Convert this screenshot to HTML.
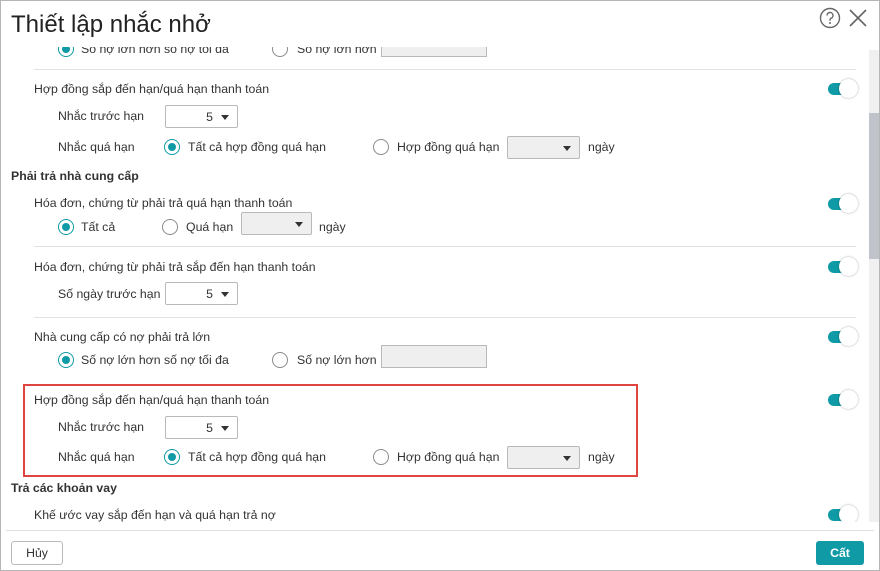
<!DOCTYPE html>
<html><head><meta charset="utf-8"><style>
*{box-sizing:border-box;margin:0;padding:0}
html,body{width:880px;height:571px;overflow:hidden}
body{background:#fff;font-family:"Liberation Sans",sans-serif;font-size:12.3px;color:#333;position:relative}
.frame{position:absolute;left:0;top:0;width:880px;height:571px;border:1px solid #b5b5b5}
.a{position:absolute;white-space:nowrap;line-height:14px}
.t{transform:translateY(-7px)}
.b{font-weight:bold}
.clip{position:absolute;left:0;top:47px;width:868px;height:475px;overflow:hidden}
.in{position:absolute;left:0;top:-47px;width:868px;height:570px}
.hr{position:absolute;height:1px;background:#e3e3e3;left:34px;width:822px}
.r{position:absolute;width:16px;height:16px;border:1px solid #8a8a8a;border-radius:50%;background:#fff;transform:translate(-8px,-8px)}
.r.on{border-color:#0f9aa5}
.r.on:after{content:"";position:absolute;left:3px;top:3px;width:8px;height:8px;border-radius:50%;background:#0f9aa5}
.sel{position:absolute;border:1px solid #b9b9b9;background:#fff;height:23px;border-radius:2px}
.sel.g{background:#efefef}
.sel span{position:absolute;right:24px;top:4px}
.sel:after{content:"";position:absolute;right:8px;top:9px;border-left:4px solid transparent;border-right:4px solid transparent;border-top:5px solid #333}
.box{position:absolute;border:1px solid #b9b9b9;background:#efefef;height:23px}
.tg{position:absolute;left:828px;width:30px;height:20px;transform:translateY(-10px)}
.tg:before{content:"";position:absolute;left:0;top:4px;width:22px;height:12px;border-radius:6px;background:#0f9aa5}
.tg:after{content:"";position:absolute;left:11px;top:0;width:19px;height:19px;border-radius:50%;background:#fff;box-shadow:0 0 2px rgba(0,0,0,.35)}
</style></head><body>
<div class="frame"></div>
<div class="a" style="left:11px;top:10px;font-size:24px;line-height:30px;color:#222">Thiết lập nhắc nhở</div>
<svg style="position:absolute;left:819px;top:7px" width="22" height="22" viewBox="0 0 22 22"><circle cx="11" cy="11" r="9.5" fill="none" stroke="#666" stroke-width="1.4"/><path d="M8 8.5a3 3 0 1 1 4 2.8c-.8.4-1 .9-1 1.7v.8" fill="none" stroke="#666" stroke-width="1.4"/><circle cx="11" cy="16" r="1" fill="#666"/></svg>
<svg style="position:absolute;left:848px;top:8px" width="20" height="20" viewBox="0 0 20 20"><path d="M2 2L18 18M18 2L2 18" stroke="#666" stroke-width="1.6"/></svg>
<div style="position:absolute;left:869px;top:50px;width:10px;height:472px;background:#f0f0f0"></div>
<div style="position:absolute;left:869px;top:113px;width:10px;height:146px;background:#c0c3ca"></div>
<div class="clip"><div class="in">
<div class="r on" style="left:66px;top:49px"></div><div class="a t" style="left:81px;top:49px">Số nợ lớn hơn số nợ tối đa</div>
<div class="r" style="left:280px;top:49px"></div><div class="a t" style="left:297px;top:49px">Số nợ lớn hơn</div>
<div class="box" style="left:381px;top:34px;width:106px"></div>
<div class="hr" style="top:69px"></div>
<div class="a t" style="left:34px;top:89px">Hợp đồng sắp đến hạn/quá hạn thanh toán</div><div class="tg" style="top:89px"></div>
<div class="a t" style="left:58px;top:116px">Nhắc trước hạn</div><div class="sel" style="left:165px;top:105px;width:73px"><span>5</span></div>
<div class="a t" style="left:58px;top:147px">Nhắc quá hạn</div>
<div class="r on" style="left:172px;top:147px"></div><div class="a t" style="left:188px;top:147px">Tất cả hợp đồng quá hạn</div>
<div class="r" style="left:381px;top:147px"></div><div class="a t" style="left:397px;top:147px">Hợp đồng quá hạn</div>
<div class="sel g" style="left:507px;top:136px;width:73px"></div><div class="a t" style="left:588px;top:147px">ngày</div>
<div class="a t b" style="left:11px;top:176px">Phải trả nhà cung cấp</div>
<div class="a t" style="left:34px;top:203px">Hóa đơn, chứng từ phải trả quá hạn thanh toán</div><div class="tg" style="top:204px"></div>
<div class="r on" style="left:66px;top:227px"></div><div class="a t" style="left:81px;top:227px">Tất cả</div>
<div class="r" style="left:170px;top:227px"></div><div class="a t" style="left:186px;top:227px">Quá hạn</div>
<div class="sel g" style="left:241px;top:212px;width:71px"></div><div class="a t" style="left:319px;top:227px">ngày</div>
<div class="hr" style="top:246px"></div>
<div class="a t" style="left:34px;top:267px">Hóa đơn, chứng từ phải trả sắp đến hạn thanh toán</div><div class="tg" style="top:267px"></div>
<div class="a t" style="left:58px;top:294px">Số ngày trước hạn</div><div class="sel" style="left:165px;top:282px;width:73px"><span>5</span></div>
<div class="hr" style="top:317px"></div>
<div class="a t" style="left:34px;top:337px">Nhà cung cấp có nợ phải trả lớn</div><div class="tg" style="top:337px"></div>
<div class="r on" style="left:66px;top:360px"></div><div class="a t" style="left:81px;top:360px">Số nợ lớn hơn số nợ tối đa</div>
<div class="r" style="left:280px;top:360px"></div><div class="a t" style="left:297px;top:360px">Số nợ lớn hơn</div>
<div class="box" style="left:381px;top:345px;width:106px"></div>
<div style="position:absolute;left:23px;top:384px;width:615px;height:93px;border:2px solid #e0443e"></div>
<div class="a t" style="left:34px;top:400px">Hợp đồng sắp đến hạn/quá hạn thanh toán</div><div class="tg" style="top:400px"></div>
<div class="a t" style="left:58px;top:427px">Nhắc trước hạn</div><div class="sel" style="left:165px;top:416px;width:73px"><span>5</span></div>
<div class="a t" style="left:58px;top:457px">Nhắc quá hạn</div>
<div class="r on" style="left:172px;top:457px"></div><div class="a t" style="left:188px;top:457px">Tất cả hợp đồng quá hạn</div>
<div class="r" style="left:381px;top:457px"></div><div class="a t" style="left:397px;top:457px">Hợp đồng quá hạn</div>
<div class="sel g" style="left:507px;top:446px;width:73px"></div><div class="a t" style="left:588px;top:457px">ngày</div>
<div class="a t b" style="left:11px;top:488px">Trả các khoản vay</div>
<div class="a t" style="left:34px;top:515px">Khế ước vay sắp đến hạn và quá hạn trả nợ</div><div class="tg" style="top:515px"></div>
</div></div>
<div style="position:absolute;left:6px;top:530px;width:868px;height:1px;background:#e0e0e0"></div>
<div style="position:absolute;left:11px;top:541px;width:52px;height:24px;border:1px solid #b9b9b9;border-radius:3px;text-align:center;line-height:22px;color:#333">Hủy</div>
<div style="position:absolute;left:816px;top:541px;width:48px;height:24px;background:#0f9aa5;border-radius:3px;text-align:center;line-height:24px;color:#fff;font-weight:bold">Cất</div>
</body></html>
